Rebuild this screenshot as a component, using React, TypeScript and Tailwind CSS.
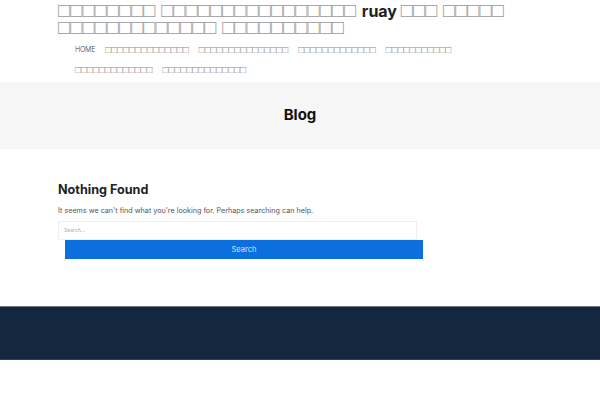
const box = (n: number) => "□".repeat(n);

const titleWords = [8, 16, -1, 3, 5, 13, 10];
const navRow1 = [14, 15, 13, 11];
const navRow2 = [13, 14];

export default function App() {
  return (
    <div className="min-h-[400px] bg-white font-['Inter',sans-serif]">
      <header className="px-[58px]">
        <h1 className="max-w-[484px] pt-[2px] font-['Liberation_Sans',sans-serif] text-[20.2px] leading-[16px] text-[#9a9a9a]">
          {titleWords.map((n, i) =>
            n < 0 ? (
              <span
                key={i}
                className="font-['Inter',sans-serif] text-[16px] font-bold text-[#222]"
              >
                ruay{" "}
              </span>
            ) : (
              <span key={i}>{box(n)} </span>
            )
          )}
        </h1>
        <nav className="mt-[5px] pl-[17px] font-['Liberation_Sans',sans-serif] text-[9.9px] leading-[20px] text-[#8a8a8a]">
          <ul className="flex gap-x-[10px]">
            <li className="font-['Inter',sans-serif] text-[7px] font-light tracking-[-0.2px] text-[#444]">
              HOME
            </li>
            {navRow1.map((n, i) => (
              <li key={i}>{box(n)}</li>
            ))}
          </ul>
          <ul className="flex gap-x-[10px]">
            {navRow2.map((n, i) => (
              <li key={i}>{box(n)}</li>
            ))}
          </ul>
        </nav>
      </header>

      <section className="mt-[2px] flex h-[67px] items-center justify-center bg-[#f6f6f6]">
        <h2 className="text-[15px] font-bold text-[#111]">Blog</h2>
      </section>

      <main className="px-[58px] pt-[33px] pb-[47px]">
        <h3 className="text-[12.6px] leading-[16px] font-bold text-[#222]">Nothing Found</h3>
        <p className="mt-[8px] text-[7.2px] leading-[10px] text-[#555]">
          It seems we can't find what you're looking for. Perhaps searching can help.
        </p>
        <div className="mt-[5px]">
          <div className="h-[19px] w-[359px] border border-[#f0f0f0] px-[5px] text-[5px] leading-[17px] text-[#aaa]">
            Search...
          </div>
          <button className="ml-[7px] block h-[19px] w-[358px] bg-[#0b6fdd] text-[7.5px] text-[#d5e6ff]">
            Search
          </button>
        </div>
      </main>

      <footer className="h-[54px] border-t border-b border-t-[#6b7885] border-b-[#2a3f55] bg-[#13283f]" />
    </div>
  );
}
